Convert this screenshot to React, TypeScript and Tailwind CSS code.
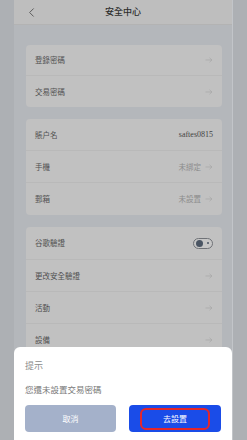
import { ChevronLeft } from 'lucide-react';

const font = { fontFamily: '"Noto Sans CJK TC", "Noto Sans", sans-serif' };

const Arrow = () => (
  <svg width="8" height="6" viewBox="0 0 8 6" className="text-[#a9a9a9]">
    <path d="M0.5 3h6.5M4.5 0.8L7 3L4.5 5.2" fill="none" stroke="currentColor" strokeWidth="0.8" />
  </svg>
);

const Row = ({ label, value, arrow = true, last = false, serif = false, tall = false }: { label: string; value?: string; arrow?: boolean; last?: boolean; serif?: boolean; tall?: boolean }) => (
  <div className={`${tall ? 'h-[32px]' : 'h-[31px]'} flex items-center justify-between px-[9px] ${last ? '' : 'border-b border-[#b9b9b9]'}`}>
    <span className="text-[7.5px] text-[#505050]">{label}</span>
    <div className="flex items-center gap-[4px]">
      {value && (
        <span
          className={serif ? 'text-[8px] text-[#444]' : 'text-[7.5px] text-[#8c8c8c]'}
          style={serif ? { fontFamily: '"Liberation Serif", serif' } : undefined}
        >
          {value}
        </span>
      )}
      {arrow && <Arrow />}
    </div>
  </div>
);

const App = () => {
  return (
    <div className="w-[247px] h-[440px] bg-[#adb0b4] flex overflow-hidden" style={font}>
      <div className="ml-[14px] w-[219px] h-full bg-[#b4b7bb] relative flex flex-col border-r border-[#c2c5c9]">
        <header className="h-[25px] bg-[#bebebe] border-b border-[#b3b3b3] flex items-center justify-center relative shrink-0">
          <ChevronLeft className="absolute left-[10px] top-[5px] text-[#555]" size={15} strokeWidth={1.5} />
          <span className="text-[9px] text-[#2e2e2e] font-medium">安全中心</span>
        </header>

        <div className="px-[12px] pt-[20px] flex flex-col gap-[12px]">
          <div className="w-[196px] bg-[#c1c1c1] rounded-[4px]">
            <Row label="登錄密碼" />
            <Row label="交易密碼" last />
          </div>
          <div className="w-[196px] bg-[#c1c1c1] rounded-[4px]">
            <Row label="賬户名" value="saftes0815" arrow={false} serif tall />
            <Row label="手機" value="未綁定" tall />
            <Row label="郵箱" value="未設置" last tall />
          </div>
          <div className="w-[196px] bg-[#c1c1c1] rounded-[4px]">
            <div className="h-[33px] flex items-center justify-between px-[9px] border-b border-[#b9b9b9]">
              <span className="text-[7.5px] text-[#505050]">谷歌驗證</span>
              <div className="w-[20px] h-[11px] rounded-full border border-[#6f7277] bg-[#c6c6c6] flex items-center justify-between px-[1.5px]">
                <span className="w-[7px] h-[7px] rounded-full bg-[#4a5563]" />
                <span className="w-[2px] h-[2px] rounded-full bg-[#4a5563] mr-[2px]" />
              </div>
            </div>
            <div className="h-[32px] flex items-center justify-between px-[9px] border-b border-[#b9b9b9]">
              <span className="text-[7.5px] text-[#505050]">更改安全驗證</span>
              <Arrow />
            </div>
            <div className="h-[32px] flex items-center justify-between px-[9px] border-b border-[#b9b9b9]">
              <span className="text-[7.5px] text-[#505050]">活動</span>
              <Arrow />
            </div>
            <div className="h-[32px] flex items-center justify-between px-[9px]">
              <span className="text-[7.5px] text-[#505050]">設備</span>
              <Arrow />
            </div>
          </div>
        </div>

        <div className="absolute left-0 right-0 bottom-0 h-[93px] bg-white rounded-t-[6px] px-[11px] pt-[13px]">
          <div className="text-[9px] text-[#8a8a8a] leading-[12px]">提示</div>
          <div className="mt-[11px] text-[8.5px] text-[#777] leading-[12px]">您還未設置交易密碼</div>
          <div className="mt-[10px] flex justify-between">
            <button className="w-[91px] h-[27px] rounded-[4px] bg-[#a4b1ca] text-white text-[8px]">取消</button>
            <button className="w-[92px] h-[27px] rounded-[4px] bg-[#1a4ce8] flex items-center justify-center">
              <span className="w-[70px] h-[22px] rounded-[6px] border-[2px] border-[#e3262a] flex items-center justify-center text-white text-[8px]">
                去設置
              </span>
            </button>
          </div>
        </div>
      </div>
    </div>
  );
};

export default App;
